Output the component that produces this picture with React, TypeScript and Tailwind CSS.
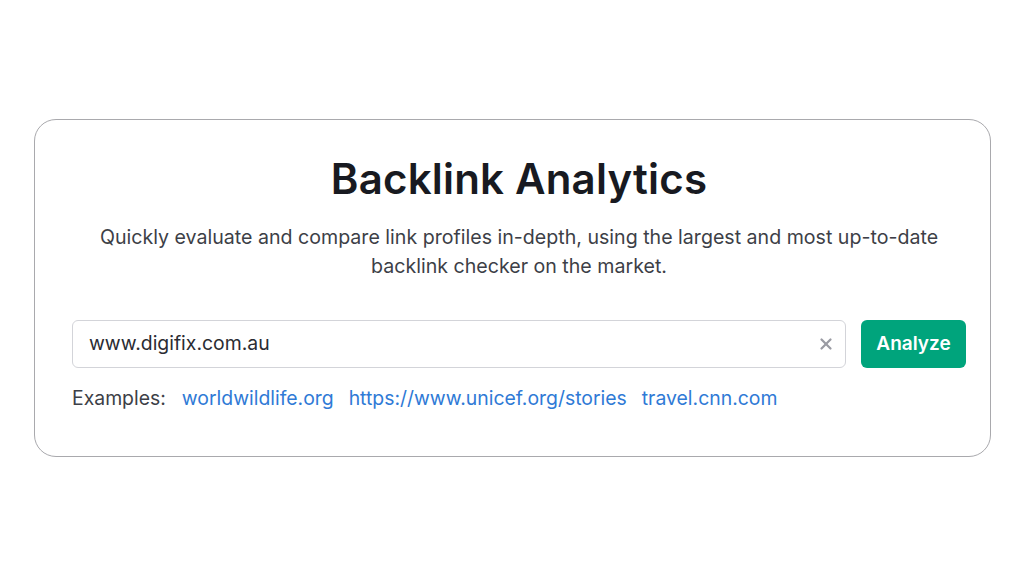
import { X } from 'lucide-react';

const examples = ['worldwildlife.org', 'https://www.unicef.org/stories', 'travel.cnn.com'];

export default function App() {
  return (
    <div className="flex h-[576px] w-[1024px] items-start bg-white pt-[119px] pl-[34px] font-['Inter',sans-serif]">
      <div className="flex h-[338px] w-[957px] flex-col items-center rounded-[22px] border border-[#a9a9ad] pl-[37px] pr-[24px] pt-[34px]">
        <h1 className="text-[42px] font-semibold leading-[50px] tracking-[0.2px] text-[#181a21]">
          Backlink Analytics
        </h1>
        <p className="mt-[19px] max-w-[880px] text-center text-[19.6px] leading-[29px] text-[#3d3f47]">
          Quickly evaluate and compare link profiles in-depth, using the largest and most up-to-date
          <br />
          backlink checker on the market.
        </p>

        <div className="mt-[39px] flex w-full items-center gap-[15px]">
          <div className="flex h-[48px] flex-1 items-center rounded-[6px] border border-[#d3d4d9] pl-[16px] pr-[10px]">
            <span className="flex-1 text-[19.4px] text-[#2a2c33]">www.digifix.com.au</span>
            <X className="h-[18px] w-[18px] text-[#9a9ba3]" strokeWidth={3} />
          </div>
          <button className="h-[48px] w-[105px] rounded-[6px] bg-[#00a47c] text-[19px] font-semibold text-white">
            Analyze
          </button>
        </div>

        <div className="mt-[16px] flex w-full items-center text-[19.4px] leading-[28px]">
          <span className="mr-[16px] text-[#3d3f47]">Examples:</span>
          {examples.map(e => (
            <a key={e} className="mr-[15px] text-[#2f7ad6]">
              {e}
            </a>
          ))}
        </div>
      </div>
    </div>
  );
}
